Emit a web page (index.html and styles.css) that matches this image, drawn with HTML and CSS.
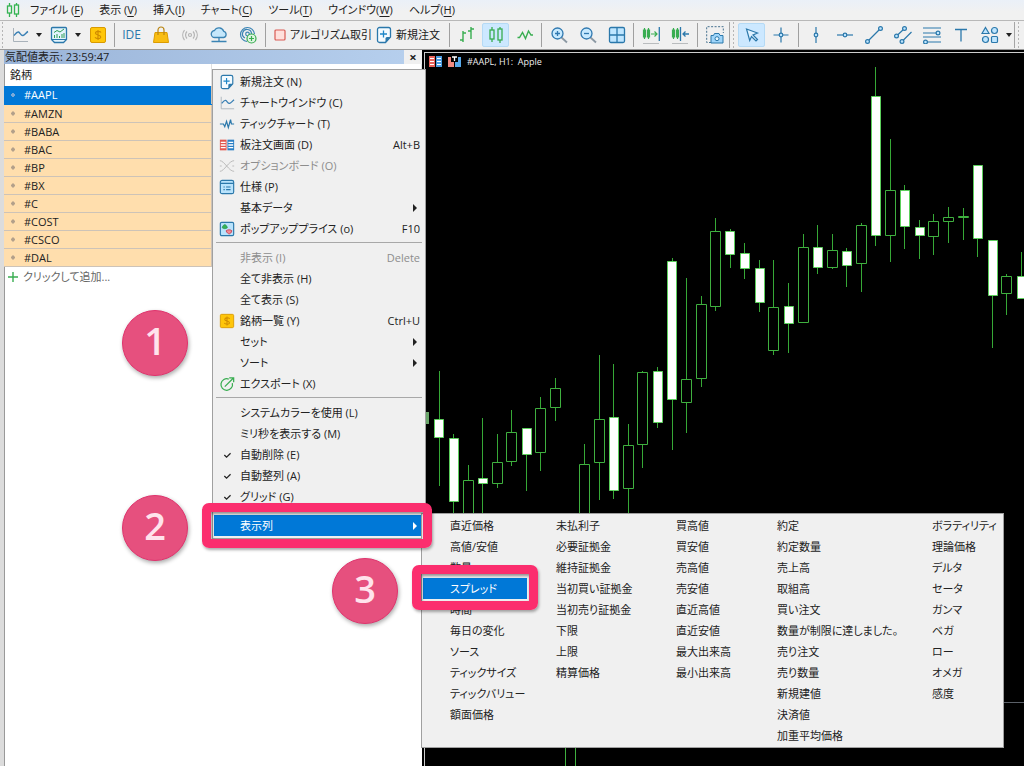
FILE: index.html
```html
<!DOCTYPE html>
<html lang="ja">
<head>
<meta charset="utf-8">
<title>#AAPL, H1: Apple</title>
<link rel="stylesheet" href="styles.css">
</head>
<body>
<svg class="defs" aria-hidden="true">
  <symbol id="i-doc" viewBox="0 0 18 18"><path d="M4.500 1.500h9a2 2 0 0 1 2 2v7.500l-5 5.500h-6a2 2 0 0 1-2-2v-11a2 2 0 0 1 2-2z" fill="#f4fbff" stroke="#2b78ab" stroke-width="1.300"/><path d="M15.500 11l-5 5.500v-4a1.500 1.500 0 0 1 1.500-1.500z" fill="#2b78ab"/><path d="M8.500 4.500v7M5 8h7" stroke="#1d86c8" stroke-width="1.300"/></symbol>
  <symbol id="i-line" viewBox="0 0 18 18"><path d="M2.500 2v13.500H17" fill="none" stroke="#a9b2ba"/><path d="M3 9.500c2-2.500 3-4 4.500-3.500S10 10 12 9.500s3-3 5-4" fill="none" stroke="#3a80b5" stroke-width="1.400"/></symbol>
  <symbol id="i-coin" viewBox="0 0 18 18"><rect x="1.500" y="1.500" width="15" height="15" rx="1.500" fill="#ffc60a" stroke="#d99a00"/><path d="M12 6.500C11 5 6.500 5 6.500 7.200S11.700 8.600 11.700 11 7 12.800 6 11.200M9 4v10" fill="none" stroke="#d08c00" stroke-width="1.200"/></symbol>
</svg>

<nav class="menubar">
  <svg class="logo" viewBox="0 0 14 16" fill="none" stroke="#34b352" stroke-width="1.300"><path d="M3.500 1v3M3.500 11v4M10.500 1v2M10.500 12v3"/><rect x="1.500" y="4" width="4" height="7"/><rect x="8.500" y="3" width="4" height="9"/></svg>
  <button>ファイル (<u>F</u>)</button>
  <button>表示 (<u>V</u>)</button>
  <button>挿入(<u>I</u>)</button>
  <button>チャート(<u>C</u>)</button>
  <button>ツール(<u>T</u>)</button>
  <button>ウインドウ(<u>W</u>)</button>
  <button>ヘルプ(<u>H</u>)</button>
</nav>

<div class="toolbar">
  <i class="grip first"></i>
  <button class="tool" aria-label="チャート"><svg><use href="#i-line"/></svg></button>
  <button class="caret" aria-label="開く"></button>
  <button class="tool" aria-label="テンプレート"><svg viewBox="0 0 18 18" fill="none"><path d="M2.500 1.500h13a1 1 0 0 1 1 1v11l-3 3h-9l-3-3v-11a1 1 0 0 1 1-1z" fill="#e3f4fd" stroke="#2b78ab" stroke-width="1.300"/><path d="M1.500 13.500h15" stroke="#2b78ab"/><path d="M4 6.500l3-2 3 1.500 4-3" stroke="#2f9e56"/><path d="M4.500 12V9M7 12V8M9.500 12v-2M12 12V8M14 12V7" stroke="#2f9e56"/></svg></button>
  <button class="caret" aria-label="開く"></button>
  <button class="tool" aria-label="銘柄"><svg><use href="#i-coin"/></svg></button>
  <i class="sep narrow"></i>
  <button class="tool ide">IDE</button>
  <button class="tool" aria-label="マーケット"><svg viewBox="0 0 18 18"><path d="M3 6.500h12l1.500 10h-15z" fill="#f9bd12" stroke="#dc9c00"/><path d="M6 9V4a3 3 0 0 1 6 0v5" fill="none" stroke="#b98513" stroke-width="1.200"/></svg></button>
  <button class="tool" aria-label="シグナル"><svg viewBox="0 0 18 18" fill="none" stroke="#b4b4b4" stroke-width="1.200"><circle cx="9" cy="9" r="1.500"/><path d="M6 5.500a5 5 0 0 0 0 7M12 5.500a5 5 0 0 1 0 7M3.500 4a8 8 0 0 0 0 10M14.500 4a8 8 0 0 1 0 10"/></svg></button>
  <button class="tool" aria-label="クラウド"><svg viewBox="0 0 18 18" stroke="#3b84b4" stroke-width="1.300"><path d="M5 11.500a3.500 3.500 0 0 1-.5-7 5 5 0 0 1 9.200.8 3.200 3.200 0 0 1 0 6.200z" fill="#c5e7fb"/><path d="M9 11.500v4M1.500 15.500h15" fill="none"/></svg></button>
  <button class="tool" aria-label="接続"><svg viewBox="0 0 18 18" fill="none" stroke="#3b84b4" stroke-width="1.200"><path d="M8 15.500A7 7 0 1 1 15.500 8M6 12a4.500 4.500 0 1 1 6.500-4"/><circle cx="8.500" cy="8" r="1.800"/><circle cx="12.500" cy="12.500" r="4.500" fill="#dff5e3" stroke="#38ad50"/><path d="M12.500 10v5M10 12.500h5" stroke="#38ad50"/></svg></button>
  <i class="sep"></i>
  <button class="labelled algo"><svg viewBox="0 0 12 12"><rect x="1" y="1" width="10" height="10" rx="1" fill="#ffe0dc" stroke="#d95b54" stroke-width="1.200"/></svg>アルゴリズム取引</button>
  <button class="labelled order"><svg><use href="#i-doc"/></svg>新規注文</button>
  <i class="sep"></i>
  <button class="tool" aria-label="バーチャート"><svg viewBox="0 0 18 18" fill="none" stroke="#38ad50" stroke-width="1.400"><path d="M5 5v11M2 14h3M5 7h3M13 1v12M10 5h3M13 3h3"/></svg></button>
  <button class="tool" aria-pressed="true" aria-label="ローソク足"><svg viewBox="0 0 18 18" fill="none" stroke="#38ad50" stroke-width="1.300"><path d="M5 1v3M5 13v3M13 1v2M13 14v3"/><rect x="3" y="4" width="4" height="9"/><rect x="11" y="3" width="4" height="11"/></svg></button>
  <button class="tool" aria-label="ラインチャート"><svg viewBox="0 0 18 18" fill="none" stroke="#38ad50" stroke-width="1.400"><path d="M1.500 11.500h2l3-5 3 6 3-7.500 2.500 4h2"/></svg></button>
  <i class="sep narrow"></i>
  <button class="tool" aria-label="拡大"><svg viewBox="0 0 18 18" fill="none" stroke="#3079b0" stroke-width="1.300"><path d="M11.500 11.500l5.500 5" stroke="#8b98a3" stroke-width="1.800"/><circle cx="7.500" cy="7.500" r="5.500" fill="#c8eaff"/><path d="M7.500 5v5M5 7.500h5"/></svg></button>
  <button class="tool" aria-label="縮小"><svg viewBox="0 0 18 18" fill="none" stroke="#3079b0" stroke-width="1.300"><path d="M11.500 11.500l5.500 5" stroke="#8b98a3" stroke-width="1.800"/><circle cx="7.500" cy="7.500" r="5.500" fill="#c8eaff"/><path d="M5 7.500h5"/></svg></button>
  <button class="tool" aria-label="整列"><svg viewBox="0 0 18 18" fill="#bfe6ff" stroke="#2b78ab" stroke-width="1.300"><rect x="1.500" y="1.500" width="15" height="15" rx="1.500"/><path d="M9 1.500v15M1.500 9h15"/></svg></button>
  <i class="sep narrow"></i>
  <button class="tool" aria-label="自動スクロール"><svg viewBox="0 0 18 18" fill="none"><path d="M1 17.500h16" stroke="#b9bcbe"/><path d="M2.500 2v11M6.500 2v11M1.500 4h2v7h-2zM5.500 4h2v7h-2zM9 8h6M12.500 5.500L15 8l-2.500 2.500" stroke="#38ad50" stroke-width="1.200"/><path d="M17.300 1v14" stroke="#2b78ab" stroke-width="1.300"/></svg></button>
  <button class="tool" aria-label="チャートシフト"><svg viewBox="0 0 18 18" fill="none"><path d="M1 17.500h16" stroke="#b9bcbe"/><path d="M2.500 2v11M6.500 2v11M1.500 4h2v7h-2zM5.500 4h2v7h-2z" stroke="#38ad50" stroke-width="1.200"/><path d="M9.500 1v14M12 8h6M14.500 5.500L12 8l2.500 2.500" stroke="#2b78ab" stroke-width="1.300"/></svg></button>
  <i class="sep"></i>
  <button class="tool" aria-label="スクリーンショット"><svg viewBox="0 0 18 18" fill="none"><path d="M5 16.500H.7V.7h16.600V7" stroke="#45718f" stroke-dasharray="2 1.500"/><path d="M5 9.500h2.500l1-2h4.500l1 2h3v7.500H5z" fill="#9fd5fa" stroke="#2b78ab"/><circle cx="11" cy="12.700" r="2" fill="#e8f7ff" stroke="#2b78ab"/></svg></button>
  <i class="grip boxed"></i>
  <button class="tool" aria-pressed="true" aria-label="カーソル"><svg viewBox="0 0 18 18"><path d="M3.500 3l11 4-4.500 2 4.500 4.500-1.500 1.500-4.500-4.500-1.800 4z" fill="#dff2ff" stroke="#2b78ab" stroke-width="1.200"/></svg></button>
  <button class="tool" aria-label="クロスヘア"><svg viewBox="0 0 18 18" fill="#bfe6ff" stroke="#2b78ab" stroke-width="1.200"><path d="M9 1.500v15M1.500 9h15"/><circle cx="9" cy="9" r="1.800"/></svg></button>
  <i class="sep"></i>
  <button class="tool" aria-label="垂直線"><svg viewBox="0 0 18 18" fill="#bfe6ff" stroke="#2b78ab" stroke-width="1.200"><path d="M9 1v16"/><circle cx="9" cy="9" r="1.800"/></svg></button>
  <button class="tool" aria-label="水平線"><svg viewBox="0 0 18 18" fill="#bfe6ff" stroke="#2b78ab" stroke-width="1.200"><path d="M1 9h16"/><circle cx="9" cy="9" r="1.800"/></svg></button>
  <button class="tool" aria-label="トレンドライン"><svg viewBox="0 0 18 18" fill="#bfe6ff" stroke="#2b78ab" stroke-width="1.200"><path d="M2.500 15.500l13-13"/><circle cx="2.500" cy="15.500" r="1.900"/><circle cx="15.500" cy="2.500" r="1.900"/></svg></button>
  <button class="tool" aria-label="チャネル"><svg viewBox="0 0 18 18" fill="#bfe6ff" stroke="#2b78ab" stroke-width="1.200"><path d="M2.500 10l8-7.500M8 15.500L17.500 6"/><circle cx="2.500" cy="10" r="1.900"/><circle cx="10.500" cy="2.500" r="1.900"/><circle cx="8" cy="15.500" r="1.900"/></svg></button>
  <button class="tool" aria-label="フィボナッチ"><svg viewBox="0 0 18 18" fill="#bfe6ff" stroke="#2b78ab" stroke-width="1.200"><path d="M0 2h18M0 7h16M0 11h18M2 16h16"/><circle cx="15" cy="7" r="1.900"/><circle cx="2.500" cy="16" r="1.900"/></svg></button>
  <button class="tool" aria-label="テキスト"><svg viewBox="0 0 18 18" fill="none" stroke="#2b78ab" stroke-width="1.300"><path d="M3 3.500h12M9 3.500v12"/></svg></button>
  <button class="tool" aria-label="図形"><svg viewBox="0 0 18 18" fill="#bfe6ff" stroke="#2b78ab" stroke-width="1.200"><path d="M4.500 1.500L8 7.500H1z"/><circle cx="13.500" cy="4.500" r="3"/><circle cx="4.500" cy="13.500" r="3"/><rect x="10.500" y="10.500" width="6" height="6" rx="1"/></svg></button>
  <button class="caret" aria-label="開く"></button>
  <i class="grip boxed"></i>
</div>

<main class="workspace">
  <section class="watch">
    <header class="watch-title"><h1>気配値表示: 23:59:47</h1><button aria-label="閉じる">×</button></header>
    <table class="symbols">
      <thead><tr><th>銘柄</th><th></th></tr></thead>
      <tbody>
        <tr class="selected"><td>#AAPL</td><td></td></tr>
        <tr><td>#AMZN</td><td></td></tr>
        <tr><td>#BABA</td><td></td></tr>
        <tr><td>#BAC</td><td></td></tr>
        <tr><td>#BP</td><td></td></tr>
        <tr><td>#BX</td><td></td></tr>
        <tr><td>#C</td><td></td></tr>
        <tr><td>#COST</td><td></td></tr>
        <tr><td>#CSCO</td><td></td></tr>
        <tr><td>#DAL</td><td></td></tr>
      </tbody>
    </table>
    <button class="add"><svg viewBox="0 0 10 10"><path d="M5 0v10M0 5h10" stroke="#38ad50" stroke-width="1.400"/></svg>クリックして追加...</button>
  </section>

  <section class="chart">
    <header class="chart-title">
      <svg viewBox="0 0 14 12"><rect x="0" y="0" width="6" height="11" fill="#e8635c"/><rect x="7" y="0" width="6" height="11" fill="#4a9be0"/><path d="M1 2.500h4M1 5.500h4M1 8.500h4M8 2.500h4M8 5.500h4M8 8.500h4" stroke="#fff"/></svg>
      <svg viewBox="0 0 14 12"><path d="M0 1h3v5h3v5H0z" fill="#f08a80"/><path d="M13 1h-3v5H7v5h6z" fill="#58a9ea"/><path d="M4 1h5M6.500 1v4" stroke="#fff" stroke-width="1.300"/></svg>
      <span>#AAPL, H1:&nbsp; Apple</span>
    </header>
    <svg class="candles" role="img" aria-label="ローソク足チャート">
      <g transform="translate(-425 -53)">
        <path class="level" d="M426 702.500h900"/>
        <path class="wick" d="M439.500 371V486M453.500 434V600M468.500 465V540M482.500 418V620M497.500 434V488M511.500 410V466M526.500 428V491M540.500 397V471M555.500 378V421M584.500 444V600M599.500 355V500M613.500 364V499M628.500 424V600M642.500 371V468M657.500 367V428M672.500 258V450M686.500 278V433M701.500 296V387M715.500 218V311M730.500 229V268M744.500 243V279M759.500 260V312M773.500 260V355M788.500 283V353M803.500 234V323M817.500 225V274M832.500 234V269M846.500 248V287M861.500 223V292M875.500 67V246M890.500 139V262M904.500 185V249M919.500 220V259M933.500 214V255M948.500 207V243M963.500 208V240M977.500 165V257M992.500 240V348M1006.500 274V315M1021.500 252V298"/>
        <path class="hollow" d="M463.500 480.500h10v60h-10zM492.500 462.500h10v21h-10zM506.500 432.500h10v29h-10zM535.500 408.500h10v44h-10zM550.500 388.500h10v19h-10zM565.500 700.500h10v90h-10zM579.500 464.500h10v90h-10zM594.500 419.500h10v43h-10zM623.500 445.500h10v43h-10zM637.500 372.500h10v72h-10zM681.500 379.500h10v23h-10zM696.500 304.500h10v74h-10zM710.500 231.500h10v75h-10zM768.500 307.500h10v43h-10zM798.500 247.500h10v75h-10zM827.500 250.500h10v17h-10zM856.500 225.500h10v38h-10zM885.500 190.500h10v45h-10zM928.500 221.500h10v15h-10zM943.500 217.500h10v4h-10zM958.500 216.500h10v1h-10zM1001.500 276.500h10v17h-10z"/>
        <path class="filled" d="M434.500 419.500h9v18h-9zM449.500 438.500h9v63h-9zM478.500 478.500h9v5h-9zM522.500 428.500h9v26h-9zM609.500 417.500h9v73h-9zM653.500 371.500h9v51h-9zM667.500 261.500h9v138h-9zM725.500 231.500h9v23h-9zM740.500 253.500h9v15h-9zM755.500 268.500h9v34h-9zM784.500 306.500h9v17h-9zM813.500 247.500h9v20h-9zM842.500 251.500h9v14h-9zM871.500 96.500h9v139h-9zM900.500 190.500h9v36h-9zM915.500 227.500h9v8h-9zM973.500 165.500h9v73h-9zM988.500 240.500h9v55h-9zM1017.500 276.500h9v22h-9z"/>
        <path class="edge" d="M426 412h3v12h-3z"/>
      </g>
    </svg>
  </section>
</main>

<div class="menu context" role="menu">
  <button role="menuitem"><svg><use href="#i-doc"/></svg><span>新規注文 (N)</span></button>
  <button role="menuitem"><svg><use href="#i-line"/></svg><span>チャートウインドウ (C)</span></button>
  <button role="menuitem"><svg viewBox="0 0 18 18"><path d="M1 9h4l1.500 3 2-6 2 7 2.500-9 1 5h3" fill="none" stroke="#2b78ab" stroke-width="1.400"/></svg><span>ティックチャート (T)</span></button>
  <button role="menuitem"><svg viewBox="0 0 18 18"><rect x="1" y="3" width="7.500" height="12" fill="#e2574f"/><rect x="9.500" y="3" width="7.500" height="12" fill="#2b7fc4"/><path d="M2 6h5.500M2 9h5.500M2 12h5.500M10.500 6H16M10.500 9H16M10.500 12H16" stroke="#fff" stroke-width="1.500"/></svg><span>板注文画面 (D)</span><kbd>Alt+B</kbd></button>
  <button role="menuitem" disabled><svg viewBox="0 0 18 18" fill="none" stroke="#b5b5b5"><path d="M1 3c5 0 10 12 16 12M1 15C6 15 11 3 17 3"/><path d="M1 9h2M15 9h2"/></svg><span>オプションボード (O)</span></button>
  <button role="menuitem"><svg viewBox="0 0 18 18"><rect x="1.500" y="1.500" width="15" height="15" rx="2" fill="#b9e3fc" stroke="#2b78ab" stroke-width="1.300"/><path d="M1.500 5h15M5 9h1.500M8 9h5M5 12h1.500M8 12h5" stroke="#2b78ab" stroke-width="1.300"/></svg><span>仕様 (P)</span></button>
  <button role="menuitem" class="parent"><span>基本データ</span></button>
  <button role="menuitem"><svg viewBox="0 0 18 18"><rect x="1.500" y="1.500" width="15" height="15" rx="1.500" fill="#b9e3fc" stroke="#2b78ab" stroke-width="1.300"/><path d="M3.500 7.500C4 5.500 5.500 4 6.500 4s2.500 1.500 3 3.500c-1.500 1.500-4.500 1.500-6 0z" fill="#35b058" stroke="#1f8e43" stroke-width=".6"/><path d="M8 11c2-1.500 5-1.500 6.500 0-.5 2-2 3.500-3 3.500S8.500 13 8 11z" fill="#f38b92" stroke="#c93f53"/></svg><span>ポップアッププライス (o)</span><kbd>F10</kbd></button>
  <hr>
  <button role="menuitem" disabled><span>非表示 (I)</span><kbd>Delete</kbd></button>
  <button role="menuitem"><span>全て非表示 (H)</span></button>
  <button role="menuitem"><span>全て表示 (S)</span></button>
  <button role="menuitem"><svg><use href="#i-coin"/></svg><span>銘柄一覧 (Y)</span><kbd>Ctrl+U</kbd></button>
  <button role="menuitem" class="parent"><span>セット</span></button>
  <button role="menuitem" class="parent"><span>ソート</span></button>
  <button role="menuitem"><svg viewBox="0 0 18 18" fill="none" stroke="#38ad50" stroke-width="1.400"><path d="M11 3.500A6.500 6.500 0 1 0 15 8M6.500 12L16 2.500M11.500 2H16.500v5"/></svg><span>エクスポート (X)</span></button>
  <hr>
  <button role="menuitem"><span>システムカラーを使用 (L)</span></button>
  <button role="menuitem"><span>ミリ秒を表示する (M)</span></button>
  <button role="menuitemcheckbox" aria-checked="true"><svg viewBox="0 0 18 18"><path d="M6 9l2.500 2.500L13 7" fill="none" stroke="#222" stroke-width="1.400"/></svg><span>自動削除 (E)</span></button>
  <button role="menuitemcheckbox" aria-checked="true"><svg viewBox="0 0 18 18"><path d="M6 9l2.500 2.500L13 7" fill="none" stroke="#222" stroke-width="1.400"/></svg><span>自動整列 (A)</span></button>
  <button role="menuitemcheckbox" aria-checked="true"><svg viewBox="0 0 18 18"><path d="M6 9l2.500 2.500L13 7" fill="none" stroke="#222" stroke-width="1.400"/></svg><span>グリッド (G)</span></button>
  <hr>
  <button role="menuitem" class="parent active"><span>表示列</span></button>
</div>

<div class="menu columns" role="menu">
  <div class="column">
    <button role="menuitem">直近価格</button><button role="menuitem">高値/安値</button><button role="menuitem">数量</button><button role="menuitem" class="active">スプレッド</button><button role="menuitem">時間</button><button role="menuitem">毎日の変化</button><button role="menuitem">ソース</button><button role="menuitem">ティックサイズ</button><button role="menuitem">ティックバリュー</button><button role="menuitem">額面価格</button>
  </div>
  <div class="column">
    <button role="menuitem">未払利子</button><button role="menuitem">必要証拠金</button><button role="menuitem">維持証拠金</button><button role="menuitem">当初買い証拠金</button><button role="menuitem">当初売り証拠金</button><button role="menuitem">下限</button><button role="menuitem">上限</button><button role="menuitem">精算価格</button>
  </div>
  <div class="column">
    <button role="menuitem">買高値</button><button role="menuitem">買安値</button><button role="menuitem">売高値</button><button role="menuitem">売安値</button><button role="menuitem">直近高値</button><button role="menuitem">直近安値</button><button role="menuitem">最大出来高</button><button role="menuitem">最小出来高</button>
  </div>
  <div class="column">
    <button role="menuitem">約定</button><button role="menuitem">約定数量</button><button role="menuitem">売上高</button><button role="menuitem">取組高</button><button role="menuitem">買い注文</button><button role="menuitem">数量が制限に達しました。</button><button role="menuitem">売り注文</button><button role="menuitem">売り数量</button><button role="menuitem">新規建値</button><button role="menuitem">決済値</button><button role="menuitem">加重平均価格</button>
  </div>
  <div class="column">
    <button role="menuitem">ボラティリティ</button><button role="menuitem">理論価格</button><button role="menuitem">デルタ</button><button role="menuitem">セータ</button><button role="menuitem">ガンマ</button><button role="menuitem">ベガ</button><button role="menuitem">ロー</button><button role="menuitem">オメガ</button><button role="menuitem">感度</button>
  </div>
</div>

<div class="frame frame-two"></div>
<div class="frame frame-three"></div>
<div class="step step-one">1</div>
<div class="step step-two">2</div>
<div class="step step-three">3</div>
</body>
</html>
```
FILE: styles.css
```css
* { box-sizing: border-box; }

html, body { height: 100%; }

body {
  margin: 0;
  display: flex;
  flex-direction: column;
  position: relative;
  overflow: hidden;
  background: #f0f0f0;
  color: #222;
  font-family: "Open Sans", "Noto Sans CJK JP", sans-serif;
  font-size: 11px;
  line-height: 18px;
  font-feature-settings: "palt";
}

button {
  margin: 0;
  padding: 0;
  border: 0;
  background: none;
  color: inherit;
  font: inherit;
  font-feature-settings: inherit;
  white-space: nowrap;
}

.defs { position: absolute; width: 0; height: 0; }

/* Menu bar */
.menubar {
  flex: none;
  height: 21px;
  display: flex;
  align-items: center;
  gap: 16px;
  padding: 0 6px;
  background: linear-gradient(#eaf0f8, #f1f1f1 60%);
  border-bottom: 1px solid #b8b8b8;
}
.logo { width: 14px; height: 16px; margin-right: -6px; }
.menubar u { text-underline-offset: 2px; }

/* Toolbar */
.toolbar {
  flex: none;
  height: 29px;
  display: flex;
  align-items: center;
  overflow: hidden;
  border-bottom: 1px solid #9a9a9a;
}
.tool {
  flex: none;
  width: 29px;
  height: 24px;
  display: flex;
  align-items: center;
  justify-content: center;
}
.tool svg, .order svg { flex: none; width: 18px; height: 18px; }
.tool[aria-pressed="true"] {
  width: 27px;
  margin: 0 1px;
  background: #cce8ff;
  border: 1px solid #b5daf5;
  border-radius: 2px;
}
.ide { color: #2b78ab; font-size: 12px; }
.caret {
  flex: none;
  width: 10px;
  height: 24px;
  display: flex;
  align-items: center;
  justify-content: center;
}
.caret::before {
  content: "";
  border: 3px solid transparent;
  border-top: 4px solid #222;
  border-bottom: 0;
}
.sep {
  flex: none;
  width: 6px;
  height: 24px;
  background: linear-gradient(#a0a0a0, #a0a0a0) center / 1px 100% no-repeat;
}
.sep.narrow { width: 5px; }
.grip {
  flex: none;
  width: 8px;
  height: 26px;
  background: radial-gradient(circle, #b5b5b5 1px, transparent 1px) center / 3px 4px repeat-y;
}
.grip.first { width: 5px; }
.grip.boxed { border-left: 1px solid #a5a5a5; }
.labelled {
  flex: none;
  display: flex;
  align-items: center;
}
.algo { width: 104px; gap: 4px; padding-left: 6px; }
.algo svg { flex: none; width: 12px; height: 12px; }
.order { width: 74px; gap: 3px; padding-left: 3px; }

/* Workspace */
.workspace {
  flex: 1;
  min-height: 0;
  display: flex;
}
.watch {
  flex: none;
  width: 422px;
  display: flex;
  flex-direction: column;
  background: #fff;
  border-left: 4px solid #dcdcdc;
  box-shadow: inset 1px 0 #999;
}
.watch-title {
  display: flex;
  align-items: center;
  height: 14px;
  background: linear-gradient(90deg, #9ab4d8, #b7d0ee);
}
.watch-title h1 {
  flex: 1;
  margin: 0;
  padding-left: 1px;
  font-size: 11px;
  font-weight: 400;
  line-height: 14px;
}
.watch-title button {
  width: 18px;
  height: 14px;
  background: #f0f0f0;
  font-size: 13px;
  font-weight: 700;
  line-height: 14px;
}
.symbols {
  width: 100%;
  table-layout: fixed;
  border-collapse: collapse;
}
.symbols th {
  height: 22px;
  padding: 0 6px;
  font-weight: 400;
  text-align: left;
  border-right: 1px solid #e0e0e0;
}
.symbols th:first-child { width: 207px; }
.symbols td {
  height: 18px;
  padding: 0 0 0 20px;
  line-height: 17px;
  background: #ffdead;
  border-bottom: 1px solid #cdc3b8;
  border-right: 1px solid #cdc3b8;
}
.symbols td:first-child {
  background: radial-gradient(circle at 9px 9px, #b3a08a 2px, transparent 2px) #ffdead;
}
.symbols .selected td { background-color: #0078d7; border-bottom-color: #0078d7; color: #fff; }
.symbols .selected td:first-child { background: radial-gradient(circle at 9px 9px, #7ba9d8 2px, transparent 2px) #0078d7; }
.add {
  display: flex;
  align-items: center;
  gap: 5px;
  margin-top: 1px;
  padding-left: 4px;
  color: #666;
}
.add svg { width: 10px; height: 10px; }

.chart {
  flex: 1;
  min-width: 0;
  position: relative;
  background: #000;
  border: solid #000;
  border-width: 2px 0 0 2px;
  box-shadow: inset 1px 1px #ccc;
}
.chart-title {
  position: absolute;
  top: 1px;
  left: 5px;
  display: flex;
  align-items: center;
  gap: 5px;
  color: #eee;
  font-size: 9px;
}
.chart-title svg { width: 14px; height: 12px; }
.candles { display: block; width: 100%; height: 100%; padding: 1px 0 0 1px; }
.wick { fill: none; stroke: #36a836; }
.hollow { fill: #000; stroke: #3fb03f; }
.filled { fill: #fff; stroke: #5ccf5c; }
.edge { fill: #6aa66a; }
.level { stroke: #5b6068; }

/* Popup menus */
.menu {
  position: absolute;
  background: #f0f0f0;
  border: 1px solid #a0a0a0;
}
.menu button {
  display: flex;
  align-items: center;
  height: 21px;
  text-align: left;
}
.menu .active { background: #0078d7; color: #fff; }
.menu button:disabled { color: #8d8d8d; }
.context {
  top: 69px;
  left: 212px;
  width: 214px;
  padding: 1px 1px 2px;
}
.context button {
  width: 100%;
  display: grid;
  grid-template-columns: 18px 1fr auto;
  column-gap: 3px;
  padding: 0 4px 0 5px;
}
.context button svg { width: 16px; height: 16px; }
.context button span { grid-column: 2; grid-row: 1; }
.context kbd { grid-column: 3; font: inherit; }
.context .parent::after {
  content: "";
  grid-column: 3;
  margin-right: 3px;
  border: 4px solid transparent;
  border-left-color: currentColor;
  border-right: 0;
}
.context hr {
  margin: 3px 2px 4px;
  border: 0;
  border-top: 1px solid #a8a8a8;
}
.columns {
  top: 513px;
  left: 421px;
  display: grid;
  grid-template-columns: 106px 120px 101px 155px 97px;
  padding: 1px;
}
.column button { width: 100%; padding-left: 27px; }
.column .active { width: 104px; }

/* Step markers */
.frame {
  position: absolute;
  height: 45px;
  border: 9px solid #fb2e6e;
  border-radius: 7px;
  box-shadow: 1px 2px 3px #0005, inset 1px 2px 3px #0006;
}
.frame-two { top: 503px; left: 202px; width: 230px; }
.frame-three { top: 565px; left: 412px; width: 126px; }
.step {
  position: absolute;
  width: 66px;
  height: 66px;
  border: 1px solid #e0336d;
  border-radius: 50%;
  background: #e6507e;
  box-shadow: 1px 2px 4px #0005;
  color: #ffe3ec;
  font: 600 38px/58px "Open Sans", sans-serif;
  text-align: center;
}
.step-one { top: 310px; left: 122px; }
.step-two { top: 495px; left: 122px; }
.step-three { top: 558px; left: 332px; }
```
